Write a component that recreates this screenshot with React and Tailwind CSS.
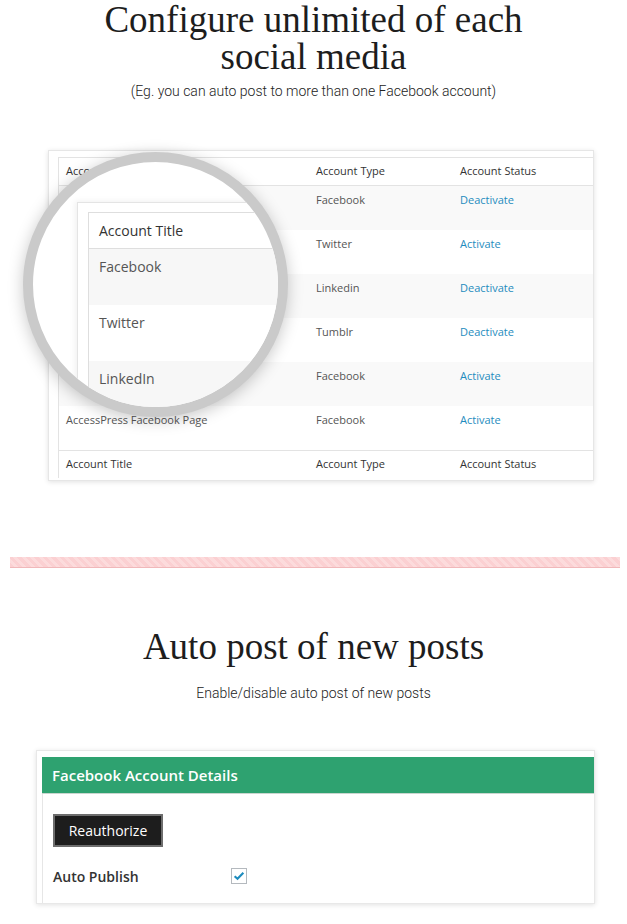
import React from 'react';

const sans = "font-['Open_Sans',sans-serif]";

const accounts = [
  { title: 'Facebook', type: 'Facebook', status: 'Deactivate' },
  { title: 'Twitter', type: 'Twitter', status: 'Activate' },
  { title: 'LinkedIn', type: 'Linkedin', status: 'Deactivate' },
  { title: 'Tumblr', type: 'Tumblr', status: 'Deactivate' },
  { title: 'Fa', type: 'Facebook', status: 'Activate' },
  { title: 'AccessPress Facebook Page', type: 'Facebook', status: 'Activate' },
];

const HeadRow = ({ border }) => (
  <div className={`flex h-[28px] items-center text-[11px] text-[#333] ${border}`}>
    <div className="w-[250px] pl-[7px]">Account Title</div>
    <div className="w-[144px] pl-[7px]">Account Type</div>
    <div className="pl-[7px]">Account Status</div>
  </div>
);

// the magnified part of the table, shown inside the lens
const Lens = () => (
  <div className="absolute left-[-26px] top-[1px] h-[265px] w-[265px] overflow-hidden rounded-full border-[10px] border-[#cacaca] bg-white shadow-[0_3px_16px_rgba(0,0,0,0.22)]">
    <div className="absolute left-[44px] top-[40px] h-[400px] w-[400px] border-l border-t border-[#e4e4e4] shadow-[-2px_-1px_6px_rgba(0,0,0,0.06)]">
      <div className={`ml-[10px] mt-[9px] border-l border-t border-[#dedede] ${sans}`}>
        <div className="flex h-[36px] items-center border-b border-[#dedede] pl-[10px] text-[14px] text-[#333]">
          Account Title
        </div>
        {['Facebook', 'Twitter', 'LinkedIn'].map((t, i) => (
          <div
            key={t}
            className={`h-[56px] pl-[10px] pt-[8px] text-[14px] leading-[20px] text-[#555] ${i % 2 === 0 ? 'bg-[#f7f7f7]' : 'bg-white'}`}
          >
            {t}
          </div>
        ))}
      </div>
    </div>
  </div>
);

export default function App() {
  return (
    <div className="w-[627px] bg-white pb-[20px]">
      <section className="text-center">
        <h1 className="pt-[1px] font-['Liberation_Serif',serif] text-[37px] font-normal leading-[37px] text-[#1d1d1d]">
          Configure unlimited of each
          <br />
          social media
        </h1>
        <p className="mt-[6px] font-['Roboto',sans-serif] text-[14px] font-light leading-[20px] text-[#222]">
          (Eg. you can auto post to more than one Facebook account)
        </p>
      </section>

      <div className="relative ml-[48px] mt-[49px] h-[331px] w-[546px] border border-[#e6e6e6] bg-white shadow-[0_1px_5px_rgba(0,0,0,0.12)]">
        <div className={`ml-[9px] mt-[6px] border-l border-t border-[#e3e3e3] ${sans}`}>
          <HeadRow border="border-b border-[#e3e3e3]" />
          {accounts.map((a, i) => (
            <div
              key={i}
              className={`flex h-[44px] pt-[6px] text-[11px] leading-[16px] ${i % 2 === 0 ? 'bg-[#f9f9f9]' : 'bg-white'}`}
            >
              <div className="w-[250px] pl-[7px] text-[#555]">{a.title}</div>
              <div className="w-[144px] pl-[7px] text-[#555]">{a.type}</div>
              <div className="pl-[7px] text-[#1e8cbe]">{a.status}</div>
            </div>
          ))}
          <HeadRow border="border-t border-[#e3e3e3]" />
        </div>
        <Lens />
      </div>

      <div className="ml-[10px] mr-[7px] mt-[76px] h-[11px] border-b border-[#f0b8ba] bg-[repeating-linear-gradient(45deg,#fbd0d2_0px,#fbd0d2_3px,#fcdbdc_3px,#fcdbdc_6px)]" />

      <section className="text-center">
        <h2 className="mt-[60px] font-['Liberation_Serif',serif] text-[37px] font-normal leading-[37px] text-[#1d1d1d]">
          Auto post of new posts
        </h2>
        <p className="mt-[18px] font-['Roboto',sans-serif] text-[14px] font-light leading-[20px] text-[#222]">
          Enable/disable auto post of new posts
        </p>
      </section>

      <div className={`ml-[36px] mt-[47px] h-[154px] w-[559px] border border-[#e8e8e8] bg-white shadow-[0_1px_5px_rgba(0,0,0,0.12)] ${sans}`}>
        <div className="ml-[5px] mt-[6px] flex h-[37px] items-center border-b border-[#c9d6cf] bg-[#2ea270] pl-[10px] text-[15px] font-semibold text-white">
          Facebook Account Details
        </div>
        <div className="ml-[5px] h-[109px] border-l border-[#e6e6e6] pl-[10px] pt-[20px]">
          <button className="h-[33px] w-[110px] border-2 border-[#6d6d6d] bg-[#1d1d1d] text-[14px] text-white">
            Reauthorize
          </button>
          <div className="mt-[19px] flex h-[20px] items-center">
            <div className="w-[178px] text-[14px] font-semibold text-[#333]">Auto Publish</div>
            <div className="flex h-[16px] w-[16px] items-center justify-center border border-[#b4b9be] bg-white">
              <svg viewBox="0 0 16 16" className="h-[14px] w-[14px]">
                <path d="M3 8.2 L6.3 11.2 L13 4.2" fill="none" stroke="#1e8cbe" strokeWidth="2.4" />
              </svg>
            </div>
          </div>
        </div>
      </div>
    </div>
  );
}
